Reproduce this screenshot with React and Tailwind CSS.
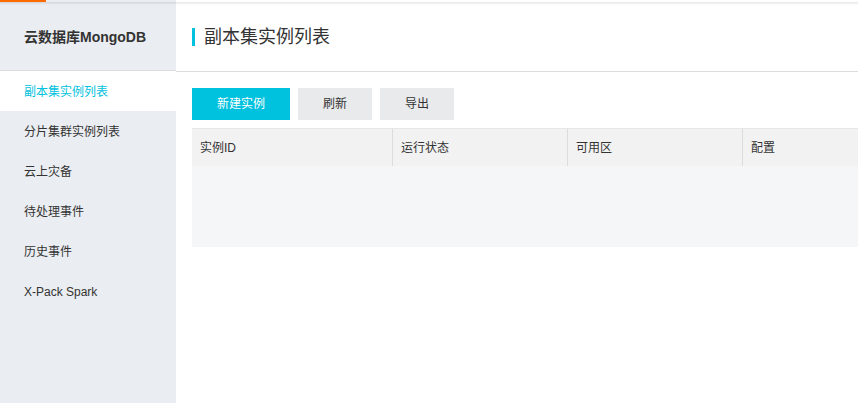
const menu = ["副本集实例列表", "分片集群实例列表", "云上灾备", "待处理事件", "历史事件", "X-Pack Spark"]
const cols = [
    { name: "实例ID", w: "w-[200px]" },
    { name: "运行状态", w: "w-[175px]" },
    { name: "可用区", w: "w-[175px]" },
    { name: "配置", w: "flex-1" },
]

export default function App() {
    return (
        <div className="relative flex h-[403px] w-[858px] overflow-hidden bg-white text-[#333] font-['Liberation_Sans','Noto_Sans_CJK_SC',sans-serif]">
            <div className="absolute left-0 top-0 z-10 h-[2px] w-[46px] bg-[#ff6a00]" />
            <div className="absolute left-0 top-[2px] z-10 h-[3px] w-full bg-gradient-to-b from-black/10 to-transparent" />

            <aside className="flex w-[176px] shrink-0 flex-col bg-[#eaedf1]">
                <div className="flex h-[71px] items-center pl-[24px] pt-[4px] text-[14px] font-bold text-[#333] border-b border-[#dcdcdc]">
                    云数据库MongoDB
                </div>
                <ul className="text-[12px]">
                    {menu.map((m, i) => (
                        <li key={m} className={"flex h-[40px] items-center pl-[24px] pt-[2px] " + (i === 0 ? "bg-white text-[#00c1de]" : "text-[#333]")}>
                            {m}
                        </li>
                    ))}
                </ul>
            </aside>

            <main className="flex flex-1 flex-col">
                <div className="flex h-[72px] shrink-0 items-center border-b border-[#dcdcdc] pl-[16px] pt-[2px]">
                    <span className="mr-[9px] h-[18px] w-[3px] bg-[#00c1de]" />
                    <h1 className="pt-[2px] text-[18px] text-[#333]">副本集实例列表</h1>
                </div>

                <div className="px-[16px] pt-[16px]">
                    <div className="flex gap-[8px]">
                        <button className="h-[32px] w-[98px] bg-[#00c1de] text-[12px] text-white">新建实例</button>
                        <button className="h-[32px] w-[74px] bg-[#e9eaeb] text-[12px] text-[#333]">刷新</button>
                        <button className="h-[32px] w-[74px] bg-[#e9eaeb] text-[12px] text-[#333]">导出</button>
                    </div>

                    <div className="mt-[8px] mr-[-16px]">
                        <div className="flex h-[38px] border-t border-[#e6e6e6] bg-[#f2f2f2] text-[12px] text-[#333]">
                            {cols.map((c, i) => (
                                <div key={c.name} className={"flex items-center pl-[8px] " + c.w + (i > 0 ? " border-l border-[#dcdcdc]" : "")}>
                                    {c.name}
                                </div>
                            ))}
                        </div>
                        <div className="h-[81px] bg-[#f5f6f7]" />
                    </div>
                </div>
            </main>
        </div>
    )
}
